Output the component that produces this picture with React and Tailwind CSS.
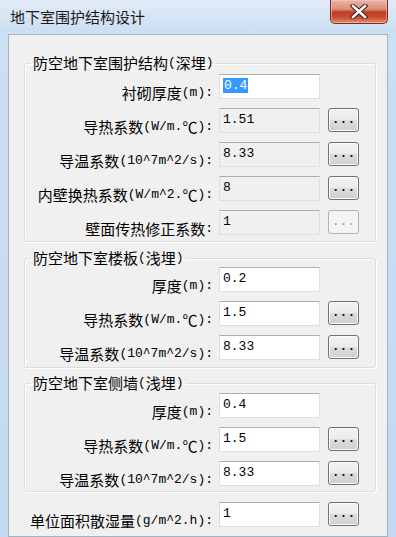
import React from "react";

function Mixed({ text }) {
  const parts = text.match(/[\x00-\x7f]+|[^\x00-\x7f]+/g) || [];
  return parts.map((p, i) =>
    /[\x00-\x7f]/.test(p[0]) ? (
      <span key={i} className="font-['Liberation_Mono',monospace] text-[13px] leading-[16px]">
        {p}
      </span>
    ) : (
      <span key={i} className="leading-[16px]">{p}</span>
    )
  );
}

function Dots({ disabled }) {
  return (
    <div
      className={
        disabled
          ? "ml-[8px] w-[31px] h-[24px] rounded-[3px] border border-[#adb2b5] bg-[#f4f4f4] flex justify-center"
          : "ml-[8px] w-[31px] h-[24px] rounded-[3px] border border-[#707070] bg-[linear-gradient(#f2f2f2,#ebebeb_50%,#dddddd_50%,#cfcfcf)] shadow-[inset_0_0_0_1px_#fbfbfb] flex justify-center"
      }
    >
      <span
        className={
          disabled
            ? "font-['Liberation_Mono',monospace] text-[13px] leading-[12px] mt-[5px] text-[#9a9a9a]"
            : "font-['Liberation_Mono',monospace] text-[13px] leading-[12px] mt-[5px] font-bold text-[#111]"
        }
      >
        ...
      </span>
    </div>
  );
}

function Row({ label, value, gray, selected, button, disabledButton }) {
  return (
    <div className="flex h-[25px] items-start">
      <div className="w-[188px] h-[25px] shrink-0 flex justify-end items-center pt-[12px] whitespace-nowrap text-black">
        <Mixed text={label} />
      </div>
      <div
        className={
          (gray ? "bg-[#f0f0f0] " : "bg-white ") +
          "ml-[6px] w-[101px] h-[25px] shrink-0 border border-[#dbdfe6] border-t-[#abadb3] pl-[3px] pt-[3px] leading-[16px] font-['Liberation_Mono',monospace] text-[13px] text-black"
        }
      >
        {selected ? (
          <span className="bg-[#3399ff] text-white px-[1px]">{value}</span>
        ) : (
          value
        )}
      </div>
      {button && <Dots disabled={disabledButton} />}
    </div>
  );
}

function Group({ title, children, className, pt, pb }) {
  return (
    <fieldset
      className={
        "w-[352px] border border-[#d5dfe5] rounded-[3px] shadow-[inset_1px_1px_0_#ffffff,1px_1px_0_#ffffff] p-0 m-0 " +
        className
      }
    >
      <legend className="ml-[6px] px-[2px] h-[16px] flex items-center text-black">
        <Mixed text={title} />
      </legend>
      <div className={"flex flex-col gap-[9px] " + pt + " " + pb}>{children}</div>
    </fieldset>
  );
}

export default function App() {
  return (
    <div className="w-[396px] h-[537px] overflow-hidden flex flex-col bg-[linear-gradient(#e1ebf7,#cddff2_30px,#c4d8ef)] font-['Noto_Sans_CJK_SC',sans-serif] text-[15px]">
      <div className="h-[34px] shrink-0 flex items-start">
        <div className="pl-[10px] pt-[7px] text-[15px] leading-[20px] text-[#1b1b1b]">
          地下室围护结构设计
        </div>
        <div className="ml-auto mr-[8px] w-[58px] h-[24px] rounded-b-[5px] border border-t-0 border-[#7a2c21] bg-[linear-gradient(#ebb4a6,#dc8e7c_40%,#c33c26_52%,#c84a31_75%,#e3906e)] shadow-[inset_0_0_0_1px_rgba(255,210,200,0.5)] flex items-center justify-center">
          <svg width="18" height="15" viewBox="0 0 18 15">
            <path
              d="M3 2 L15 13 M15 2 L3 13"
              stroke="#4a1a12"
              strokeWidth="4.6"
              strokeLinecap="square"
            />
            <path
              d="M3 2 L15 13 M15 2 L3 13"
              stroke="#ffffff"
              strokeWidth="2.6"
              strokeLinecap="square"
            />
          </svg>
        </div>
      </div>
      <div className="mx-[8px] flex-1 border border-[#a3b3c6] bg-[#f0f0f0] pl-[15px] pt-[20px]">
        <Group title="防空地下室围护结构(深埋)" className="" pt="pt-[3px]" pb="pb-[6px]">
          <Row label="衬砌厚度(m):" value="0.4" selected />
          <Row label="导热系数(W/m.℃):" value="1.51" gray button />
          <Row label="导温系数(10^7m^2/s):" value="8.33" gray button />
          <Row label="内壁换热系数(W/m^2.℃):" value="8" gray button />
          <Row label="壁面传热修正系数:" value="1" gray button disabledButton />
        </Group>
        <Group title="防空地下室楼板(浅埋)" className="mt-[8px]" pt="pt-[1px]" pb="pb-[7px]">
          <Row label="厚度(m):" value="0.2" />
          <Row label="导热系数(W/m.℃):" value="1.5" button />
          <Row label="导温系数(10^7m^2/s):" value="8.33" button />
        </Group>
        <Group title="防空地下室侧墙(浅埋)" className="mt-[7px]" pt="pt-[2px]" pb="pb-[5px]">
          <Row label="厚度(m):" value="0.4" />
          <Row label="导热系数(W/m.℃):" value="1.5" button />
          <Row label="导温系数(10^7m^2/s):" value="8.33" button />
        </Group>
        <div className="mt-[10px] pl-[1px]">
          <Row label="单位面积散湿量(g/m^2.h):" value="1" button />
        </div>
      </div>
    </div>
  );
}
